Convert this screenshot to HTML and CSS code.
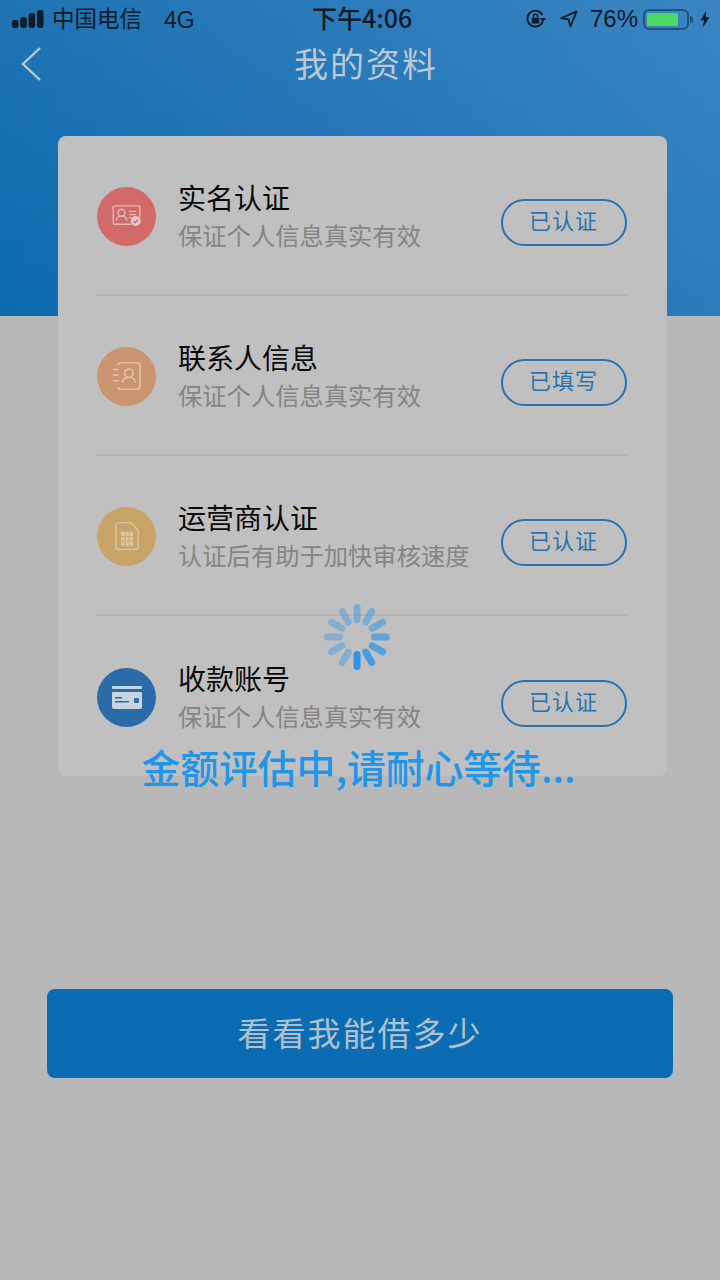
FILE: index.html
```html
<!DOCTYPE html>
<html lang="zh-CN">
  <head>
    <meta charset="UTF-8" />
    <meta name="viewport" content="width=device-width, initial-scale=1.0" />
    <title>我的资料</title>
    <link rel="stylesheet" href="styles.css">
  </head>
  <body>
    <div class="header">
      <div class="status-bar">
        <div class="status-left">
          <svg class="signal" width="32" height="20" viewBox="0 0 32 20">
            <rect x="0" y="11" width="6.500" height="8" rx="2.500" />
            <rect x="8.300" y="8" width="6.500" height="11" rx="2.500" />
            <rect x="16.600" y="4" width="6.500" height="15" rx="2.500" />
            <rect x="25" y="1" width="6.500" height="18" rx="2.500" />
          </svg>
          <span class="carrier">中国电信</span>
          <span class="network">4G</span>
        </div>
        <div class="status-time">下午4:06</div>
        <div class="status-right">
          <svg class="lock" width="22" height="22" viewBox="0 0 24 24">
            <path d="M19.500 14.500A8.700 8.700 0 1 1 19 7.600" fill="none" stroke="#0d1a28" stroke-width="2" />
            <path d="M16 10.800h7l-3.500 4.200z" fill="#0d1a28" />
            <rect x="7.500" y="10.500" width="8" height="6.500" rx="1" fill="#0d1a28" />
            <path d="M9.300 10.500V9a2.200 2.200 0 0 1 4.400 0v1.500" fill="none" stroke="#0d1a28" stroke-width="1.500" />
          </svg>
          <svg class="location" width="18" height="18" viewBox="0 0 20 20">
            <path d="M18.500 1.500 1.500 9l8 1.500L11.500 18.500z" fill="none" stroke="#0d1a28" stroke-width="2" stroke-linejoin="round" />
          </svg>
          <span class="battery-text">76%</span>
          <div class="battery">
            <div class="battery-level"></div>
          </div>
          <div class="battery-tip"></div>
          <svg class="bolt" width="10" height="18" viewBox="0 0 12 20">
            <path d="M7.500 0 0.500 11.500h4.200L3.500 20l8-12H7z" fill="#0d1a28" />
          </svg>
        </div>
      </div>
      <div class="nav">
        <svg class="back" width="22" height="34" viewBox="0 0 22 34">
          <path d="M20 1 3 17l17 16" fill="none" stroke="#bcc8d4" stroke-width="2.400" />
        </svg>
        <h1 class="nav-title">我的资料</h1>
      </div>
    </div>

    <div class="card">
      <div class="row">
        <div class="icon icon-red">
          <svg width="30" height="22" viewBox="0 0 32 24" fill="none" stroke="#e0b8b8" stroke-width="1.500">
            <path d="M21 21H2a1 1 0 0 1-1-1V2a1 1 0 0 1 1-1h27a1 1 0 0 1 1 1v12" />
            <circle cx="10" cy="8.500" r="3.800" />
            <path d="M4 17c.5-3.500 3-4.800 6-4.800s5.500 1.300 6 4.800" />
            <path d="M18 7h8M18 10.500h8M18 14h5" />
            <circle cx="25.500" cy="17.500" r="5.500" fill="#e0c8c8" stroke="none" />
            <path d="m22.800 17.500 2 2 3.200-3.500" stroke="#d26a6a" />
          </svg>
        </div>
        <div class="info">
          <div class="info-title">实名认证</div>
          <div class="info-sub">保证个人信息真实有效</div>
        </div>
        <div class="status-btn">已认证</div>
      </div>
      <div class="row">
        <div class="icon icon-orange">
          <svg width="30" height="30" viewBox="0 0 32 32" fill="none" stroke="#e6c8b2" stroke-width="1.500">
            <path d="M6 4.500A3 3 0 0 1 9 2h18a3 3 0 0 1 3 3v22a3 3 0 0 1-3 3H9a3 3 0 0 1-3-2.500" />
            <circle cx="18" cy="13" r="4.500" />
            <path d="M11 23c.5-4 3.500-5.500 7-5.500s6.500 1.500 7 5.500" />
            <path d="M1 9h6M1 15h6M1 21h6" />
          </svg>
        </div>
        <div class="info">
          <div class="info-title">联系人信息</div>
          <div class="info-sub">保证个人信息真实有效</div>
        </div>
        <div class="status-btn">已填写</div>
      </div>
      <div class="row">
        <div class="icon icon-yellow">
          <svg width="24" height="30" viewBox="0 0 26 31" fill="none" stroke="#dcc8a0" stroke-width="1.500">
            <path d="M3 1h14l8 8v19a2 2 0 0 1-2 2H3a2 2 0 0 1-2-2V3a2 2 0 0 1 2-2z" />
            <rect x="6.500" y="11" width="13" height="15" fill="#dcc8a0" stroke="none" />
            <path d="M6.500 16h13M6.500 21h13M11 11v15M15.500 11v15" stroke="#c9a468" stroke-width="1" />
          </svg>
        </div>
        <div class="info">
          <div class="info-title">运营商认证</div>
          <div class="info-sub">认证后有助于加快审核速度</div>
        </div>
        <div class="status-btn">已认证</div>
      </div>
      <div class="row">
        <div class="icon icon-blue">
          <svg width="30" height="23" viewBox="0 0 30 23">
            <rect x="0" y="0" width="30" height="3" rx="1" fill="#c8d4de" />
            <path d="M1 6h28a1 1 0 0 1 1 1v14a2 2 0 0 1-2 2H2a2 2 0 0 1-2-2V7a1 1 0 0 1 1-1z" fill="#c8d4de" />
            <rect x="3" y="11" width="7" height="1.500" fill="#2b6ca8" />
            <rect x="3" y="15" width="14" height="1.500" fill="#2b6ca8" />
            <rect x="22" y="12" width="5" height="5" rx="1" fill="#2b6ca8" />
          </svg>
        </div>
        <div class="info">
          <div class="info-title">收款账号</div>
          <div class="info-sub">保证个人信息真实有效</div>
        </div>
        <div class="status-btn">已认证</div>
      </div>
    </div>

    <div class="action-btn">看看我能借多少</div>

    <!-- loading layer -->
    <svg class="spinner" width="68" height="68" viewBox="0 0 68 68" id="spinner"></svg>
    <div class="loading-text">金额评估中,请耐心等待...</div>

    <script>
      // 12 spokes, brightest at the bottom, fading counter-clockwise
      const spinner = document.getElementById("spinner");
      const opacities = [0.45, 0.48, 0.55, 0.65, 0.75, 0.85, 1, 0.4, 0.4, 0.4, 0.4, 0.42];
      let spokes = "";
      for (let i = 0; i < 12; i++) {
        spokes += `<rect x="30.500" y="1" width="7" height="19" rx="3.500" fill="#2f95e6" opacity="${opacities[i]}" transform="rotate(${i * 30} 34 34)" />`;
      }
      spinner.innerHTML = spokes;
    </script>
  </body>
</html>
```

FILE: styles.css
```css
* {
  box-sizing: border-box;
}

body {
  position: relative;
  width: 720px;
  height: 1280px;
  margin: 0;
  overflow: hidden;
  background-color: #b8b8b8;
  font-family: "Noto Sans CJK SC", "Noto Sans", sans-serif;
}

.header {
  height: 316px;
  background:
    linear-gradient(180deg, rgba(255, 255, 255, 0.07), rgba(255, 255, 255, 0)),
    linear-gradient(90deg, #0e69ae, #2c7bbd);
}

.status-bar {
  display: flex;
  justify-content: space-between;
  align-items: center;
  height: 38px;
  padding: 0 10px 0 12px;
  color: #0d1a28;
  font-size: 22.5px;
}

.status-left {
  display: flex;
  align-items: center;
  width: 270px;
}

.signal {
  fill: #0d1a28;
  margin-right: 8px;
}

.carrier {
  margin-bottom: 4px;
}

.network {
  margin: 2px 0 0 22px;
  font-family: "Liberation Sans", sans-serif;
  font-size: 23px;
}

.status-time {
  flex: 1;
  margin-bottom: 4px;
  padding-left: 30px;
  font-size: 25px;
  font-weight: 500;
}

.status-right {
  display: flex;
  align-items: center;
}

.location {
  margin-left: 13px;
}

.battery-text {
  margin-left: 12px;
  font-family: "Liberation Sans", sans-serif;
  font-size: 24px;
}

.battery {
  width: 46px;
  height: 21px;
  margin-left: 5px;
  padding: 2px;
  border: 2px solid #1d5478;
  border-radius: 6px;
}

.battery-level {
  width: 31px;
  height: 100%;
  background-color: #4cd964;
  border-radius: 1px;
}

.battery-tip {
  width: 3px;
  height: 7px;
  margin-left: 1px;
  background-color: #1d5478;
  border-radius: 0 3px 3px 0;
}

.bolt {
  margin-left: 7px;
}

.nav {
  position: relative;
  display: flex;
  justify-content: center;
  align-items: center;
  height: 50px;
}

.back {
  position: absolute;
  left: 20px;
  top: 9px;
}

.nav-title {
  margin: 0 0 2px 12px;
  font-size: 34px;
  font-weight: 400;
  letter-spacing: 2px;
  color: #bcc8d4;
}

.card {
  width: 609px;
  height: 640px;
  margin: -180px 0 0 58px;
  padding: 0 39px;
  background-color: #c0c0c0;
  border-radius: 8px;
}

.row {
  display: flex;
  align-items: center;
  height: 160px;
  padding-top: 2px;
  border-bottom: 2px solid #b4b4b4;
}

.row:last-child {
  border-bottom: none;
}

.icon {
  display: flex;
  justify-content: center;
  align-items: center;
  width: 59px;
  height: 59px;
  flex-shrink: 0;
  border-radius: 50%;
}

.icon-red {
  background-color: #d26a6a;
}

.icon-orange {
  background-color: #ca9470;
}

.icon-yellow {
  background-color: #c9a468;
}

.icon-blue {
  background-color: #2b6ca8;
}

.info {
  flex: 1;
  margin: 0 0 0 22px;
}

.info-title {
  font-size: 28px;
  line-height: 38px;
  color: #0a0a0a;
}

.info-sub {
  font-size: 24.3px;
  line-height: 38px;
  color: #858585;
}

.status-btn {
  width: 126px;
  height: 47px;
  margin: 13px 1px 0 0;
  padding-right: 1px;
  flex-shrink: 0;
  border: 2px solid #2a72ae;
  border-radius: 24px;
  font-size: 22px;
  line-height: 37px;
  letter-spacing: 1px;
  text-align: center;
  color: #2a72ae;
}

.action-btn {
  width: 626px;
  height: 89px;
  margin: 213px 0 0 47px;
  background-color: #0b6bb3;
  border-radius: 8px;
  font-size: 33px;
  line-height: 86px;
  letter-spacing: 2px;
  text-align: center;
  color: #b0c0cc;
}

.spinner {
  position: absolute;
  left: 323px;
  top: 603px;
}

.loading-text {
  position: absolute;
  left: 0;
  top: 737px;
  width: 717px;
  font-size: 38.800px;
  font-weight: 500;
  line-height: 58px;
  text-align: center;
  color: #2196e8;
}
```
